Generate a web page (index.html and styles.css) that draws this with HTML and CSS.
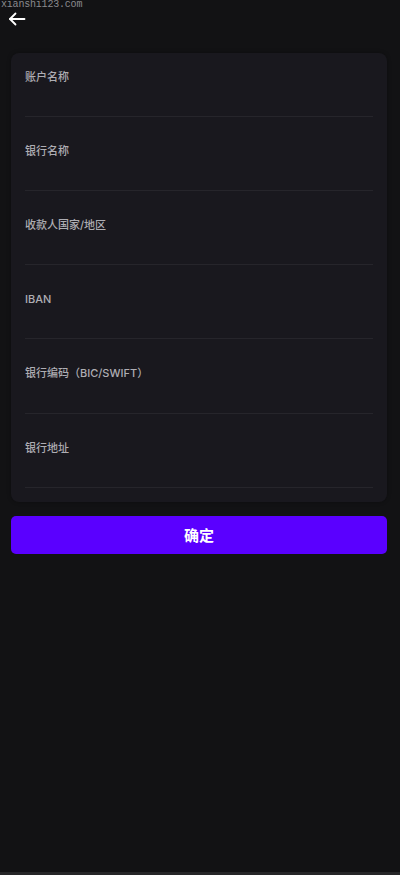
FILE: index.html
```html
<!DOCTYPE html>
<html lang="zh-CN">
<head>
  <meta charset="UTF-8">
  <title>银行账户</title>
  <link rel="stylesheet" href="styles.css">
</head>
<body>
  <div class="watermark">xianshi123.com</div>

  <header class="topbar">
    <button class="back" type="button" aria-label="返回">
      <svg width="18" height="14" viewBox="0 0 18 14" fill="none" stroke="#fff" stroke-width="1.8" stroke-linecap="round" stroke-linejoin="round">
        <path d="M16.5 7H2"/>
        <path d="M7.5 1.5L2 7l5.5 5.5"/>
      </svg>
    </button>
  </header>

  <main class="page">
    <form class="card" id="formulaire">
      <label class="row first">
        <span class="label">账户名称</span>
        <input type="text">
      </label>
      <label class="row">
        <span class="label">银行名称</span>
        <input type="text">
      </label>
      <label class="row">
        <span class="label">收款人国家/地区</span>
        <input type="text">
      </label>
      <label class="row">
        <span class="label">IBAN</span>
        <input type="text">
      </label>
      <label class="row">
        <span class="label">银行编码（BIC/SWIFT）</span>
        <input type="text">
      </label>
      <label class="row">
        <span class="label">银行地址</span>
        <input type="text">
      </label>
    </form>

    <button class="submit" type="submit" form="formulaire">确定</button>
  </main>

  <footer class="bottom"></footer>
</body>
</html>
```

FILE: styles.css
```css
* {
  box-sizing: border-box;
}

html, body {
  margin: 0;
  height: 100%;
}

body {
  font-family: Inter, "Noto Sans CJK SC", sans-serif;
  background: #121214;
  color: #fff;
  display: flex;
  flex-direction: column;
  position: relative;
}

.watermark {
  position: absolute;
  left: 1px;
  top: 0;
  font-family: "Liberation Mono", monospace;
  font-size: 10px;
  line-height: 10px;
  letter-spacing: -0.2px;
  color: #8a8a8e;
}

.topbar {
  height: 53px;
  padding: 12px 0 0 8px;
}

.back {
  background: none;
  border: none;
  padding: 0;
  display: block;
  cursor: pointer;
}

.page {
  flex: 1;
  padding: 0 13px 0 11px;
}

.card {
  background: #19181e;
  border-radius: 8px;
  padding: 0 14px 14px 14px;
  box-shadow: 0 0 4px rgba(0, 0, 0, 0.3);
}

.row {
  display: block;
  padding-top: 26px;
  height: 74px;
  border-bottom: 1px solid #26252b;
}

.row.first {
  padding-top: 16px;
  height: 64px;
}

.row:nth-child(n+4) {
  height: 74.3px;
}

.label {
  display: block;
  font-size: 11px;
  line-height: 16px;
  font-weight: 500;
  color: #aeadb3;
}

.row input {
  width: 100%;
  margin-top: 4px;
  background: transparent;
  border: none;
  outline: none;
  color: #fff;
  font-size: 13px;
  height: 20px;
}

.submit {
  margin-top: 14px;
  width: 100%;
  height: 38px;
  background: #5a00ff;
  color: #fff;
  border: none;
  border-radius: 5px;
  font-family: inherit;
  font-size: 15px;
  font-weight: 700;
  cursor: pointer;
}

.bottom {
  height: 3px;
  background: #262628;
}
```
